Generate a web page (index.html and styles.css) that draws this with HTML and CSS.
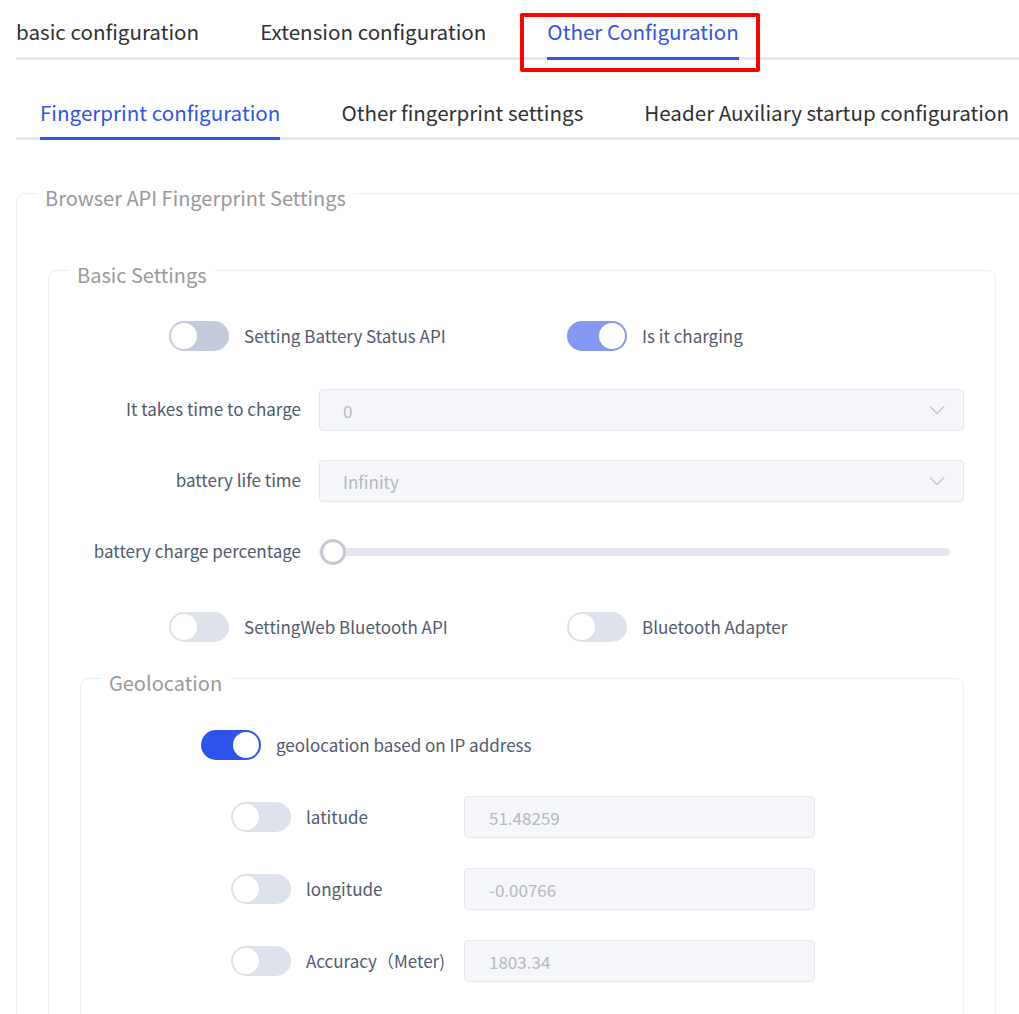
FILE: index.html
```html
<!DOCTYPE html>
<html lang="en">
<head>
    <meta charset="UTF-8">
    <meta name="viewport" content="width=device-width, initial-scale=1.0">
    <title>Other Configuration</title>
    <link rel="stylesheet" href="styles.css">
</head>
<body>
    <div class="page">
        <div class="mark"></div>

        <nav class="tabs tabs-main">
            <div class="tab">basic configuration</div>
            <div class="tab">Extension configuration</div>
            <div class="tab active">Other Configuration</div>
        </nav>

        <nav class="tabs tabs-sub">
            <div class="tab active">Fingerprint configuration</div>
            <div class="tab">Other fingerprint settings</div>
            <div class="tab">Header Auxiliary startup configuration</div>
        </nav>

        <fieldset class="group group-outer">
            <legend>Browser API Fingerprint Settings</legend>

            <fieldset class="group group-basic">
                <legend>Basic Settings</legend>

                <div class="switch-row">
                    <div class="switch-item">
                        <span class="switch switch-dim"></span>
                        <span class="switch-label">Setting Battery Status API</span>
                    </div>
                    <div class="switch-item">
                        <span class="switch on disabled"></span>
                        <span class="switch-label">Is it charging</span>
                    </div>
                </div>

                <div class="form-row">
                    <label class="form-label">It takes time to charge</label>
                    <div class="select">
                        <span>0</span>
                        <svg class="chevron" width="16" height="10" viewBox="0 0 16 10"><path d="M1 1.5 L8 8.5 L15 1.5" fill="none" stroke="#c0c4cc" stroke-width="1.3"/></svg>
                    </div>
                </div>

                <div class="form-row">
                    <label class="form-label">battery life time</label>
                    <div class="select">
                        <span>Infinity</span>
                        <svg class="chevron" width="16" height="10" viewBox="0 0 16 10"><path d="M1 1.5 L8 8.5 L15 1.5" fill="none" stroke="#c0c4cc" stroke-width="1.3"/></svg>
                    </div>
                </div>

                <div class="form-row row-slider">
                    <label class="form-label">battery charge percentage</label>
                    <div class="slider">
                        <div class="slider-track"></div>
                        <div class="slider-knob"></div>
                    </div>
                </div>

                <div class="switch-row row-bt">
                    <div class="switch-item">
                        <span class="switch"></span>
                        <span class="switch-label">SettingWeb Bluetooth API</span>
                    </div>
                    <div class="switch-item">
                        <span class="switch"></span>
                        <span class="switch-label">Bluetooth Adapter</span>
                    </div>
                </div>

                <fieldset class="group group-geo">
                    <legend>Geolocation</legend>

                    <div class="geo-main">
                        <span class="switch on"></span>
                        <span class="switch-label">geolocation based on IP address</span>
                    </div>

                    <div class="geo-item">
                        <span class="switch"></span>
                        <span class="geo-label">latitude</span>
                        <div class="input">51.48259</div>
                    </div>
                    <div class="geo-item">
                        <span class="switch"></span>
                        <span class="geo-label">longitude</span>
                        <div class="input">-0.00766</div>
                    </div>
                    <div class="geo-item">
                        <span class="switch"></span>
                        <span class="geo-label">Accuracy（Meter)</span>
                        <div class="input">1803.34</div>
                    </div>
                </fieldset>
            </fieldset>
        </fieldset>
    </div>
</body>
</html>
```

FILE: styles.css
```css
html, body {
    overflow: hidden;
}
body {
    margin: 0;
    padding: 0 0 0 16px;
    font-family: "Noto Sans CJK SC", "Noto Sans", sans-serif;
    background-color: #fff;
    color: #333;
}
.page {
    position: relative;
    width: 1012px;
}

/* red annotation box */
.mark {
    position: absolute;
    left: 504px;
    top: 13px;
    width: 232px;
    height: 51px;
    border: 4px solid #ff0000;
    border-radius: 2px;
}

.tabs {
    display: flex;
    gap: 61px;
    border-bottom: 3px solid #e4e7ed;
}
.tab {
    font-size: 20.6px;
    line-height: 28px;
    color: #303133;
    padding: 17px 0 12px;
    margin-bottom: -3px;
    border-bottom: 3px solid transparent;
    white-space: nowrap;
}
.tab.active {
    color: #2f54eb;
    border-bottom-color: #2f54eb;
}
.tabs-sub {
    margin-top: 21px;
    padding-left: 24px;
}
.tabs-sub .tab {
    padding-bottom: 11px;
}

.group {
    margin: 0;
    min-width: 0;
    border: 1px solid #ebeef5;
    border-radius: 8px;
    padding: 27px 31px 40px;
}
.group legend {
    font-size: 20px;
    line-height: 28px;
    color: #999;
    padding: 10px 8px 0;
    margin-left: -11px;
}
.group-outer {
    margin-top: 34px;
    padding-top: 39px;
}
.group-basic {
    padding-top: 26px;
}
.group-geo {
    margin-top: 11px;
    padding-top: 27px;
}

/* switches */
.switch {
    position: relative;
    display: inline-block;
    flex: none;
    width: 60px;
    height: 30px;
    border-radius: 15px;
    background-color: #dde2ea;
}
.switch::after {
    content: "";
    position: absolute;
    left: 2px;
    top: 2px;
    width: 26px;
    height: 26px;
    border-radius: 50%;
    background-color: #fff;
}
.switch-dim {
    background-color: #c3ccda;
}
.switch.on {
    background-color: #2f54eb;
}
.switch.on.disabled {
    background-color: #8497f2;
}
.switch.on::after {
    left: 32px;
}
.switch-label,
.geo-label,
.form-label {
    font-size: 17px;
    line-height: 24px;
    color: #515a6e;
    white-space: nowrap;
}
.form-label {
    padding-bottom: 3px;
}

.switch-row {
    display: grid;
    grid-template-columns: 398px auto;
    height: 42px;
    padding-left: 89px;
    margin-bottom: 32px;
}
.switch-item {
    display: flex;
    align-items: center;
    gap: 15px;
}
.row-bt {
    margin-bottom: 0;
}

/* form rows */
.form-row {
    display: grid;
    grid-template-columns: 221px 1fr;
    column-gap: 18px;
    align-items: center;
    height: 42px;
    margin-bottom: 29px;
}
.form-label {
    text-align: right;
}
.row-slider {
    margin-bottom: 33px;
}
.select,
.input {
    box-sizing: border-box;
    height: 42px;
    display: flex;
    align-items: center;
    justify-content: space-between;
    background-color: #f5f6fa;
    border: 1px solid #e4e7ef;
    border-radius: 4px;
    padding: 0 18px 0 23px;
    font-size: 17px;
    color: #b4b8c1;
}
.chevron {
    display: block;
}

.slider {
    position: relative;
    height: 26px;
    display: flex;
    align-items: center;
    padding-right: 14px;
}
.slider-track {
    flex: 1;
    height: 8px;
    border-radius: 4px;
    background-color: #e4e7ed;
}
.slider-knob {
    position: absolute;
    left: 1px;
    top: 0;
    box-sizing: border-box;
    width: 26px;
    height: 26px;
    border-radius: 50%;
    background-color: #fff;
    border: 3px solid #c6cad2;
}

/* geolocation */
.geo-main {
    display: flex;
    align-items: center;
    gap: 15px;
    height: 42px;
    padding-left: 89px;
    margin-bottom: 30px;
}
.geo-item {
    display: flex;
    align-items: center;
    height: 42px;
    padding-left: 119px;
    margin-bottom: 30px;
}
.geo-item .geo-label {
    width: 158px;
    margin-left: 15px;
}
.geo-item .input {
    width: 351px;
    padding-left: 24px;
}
```
